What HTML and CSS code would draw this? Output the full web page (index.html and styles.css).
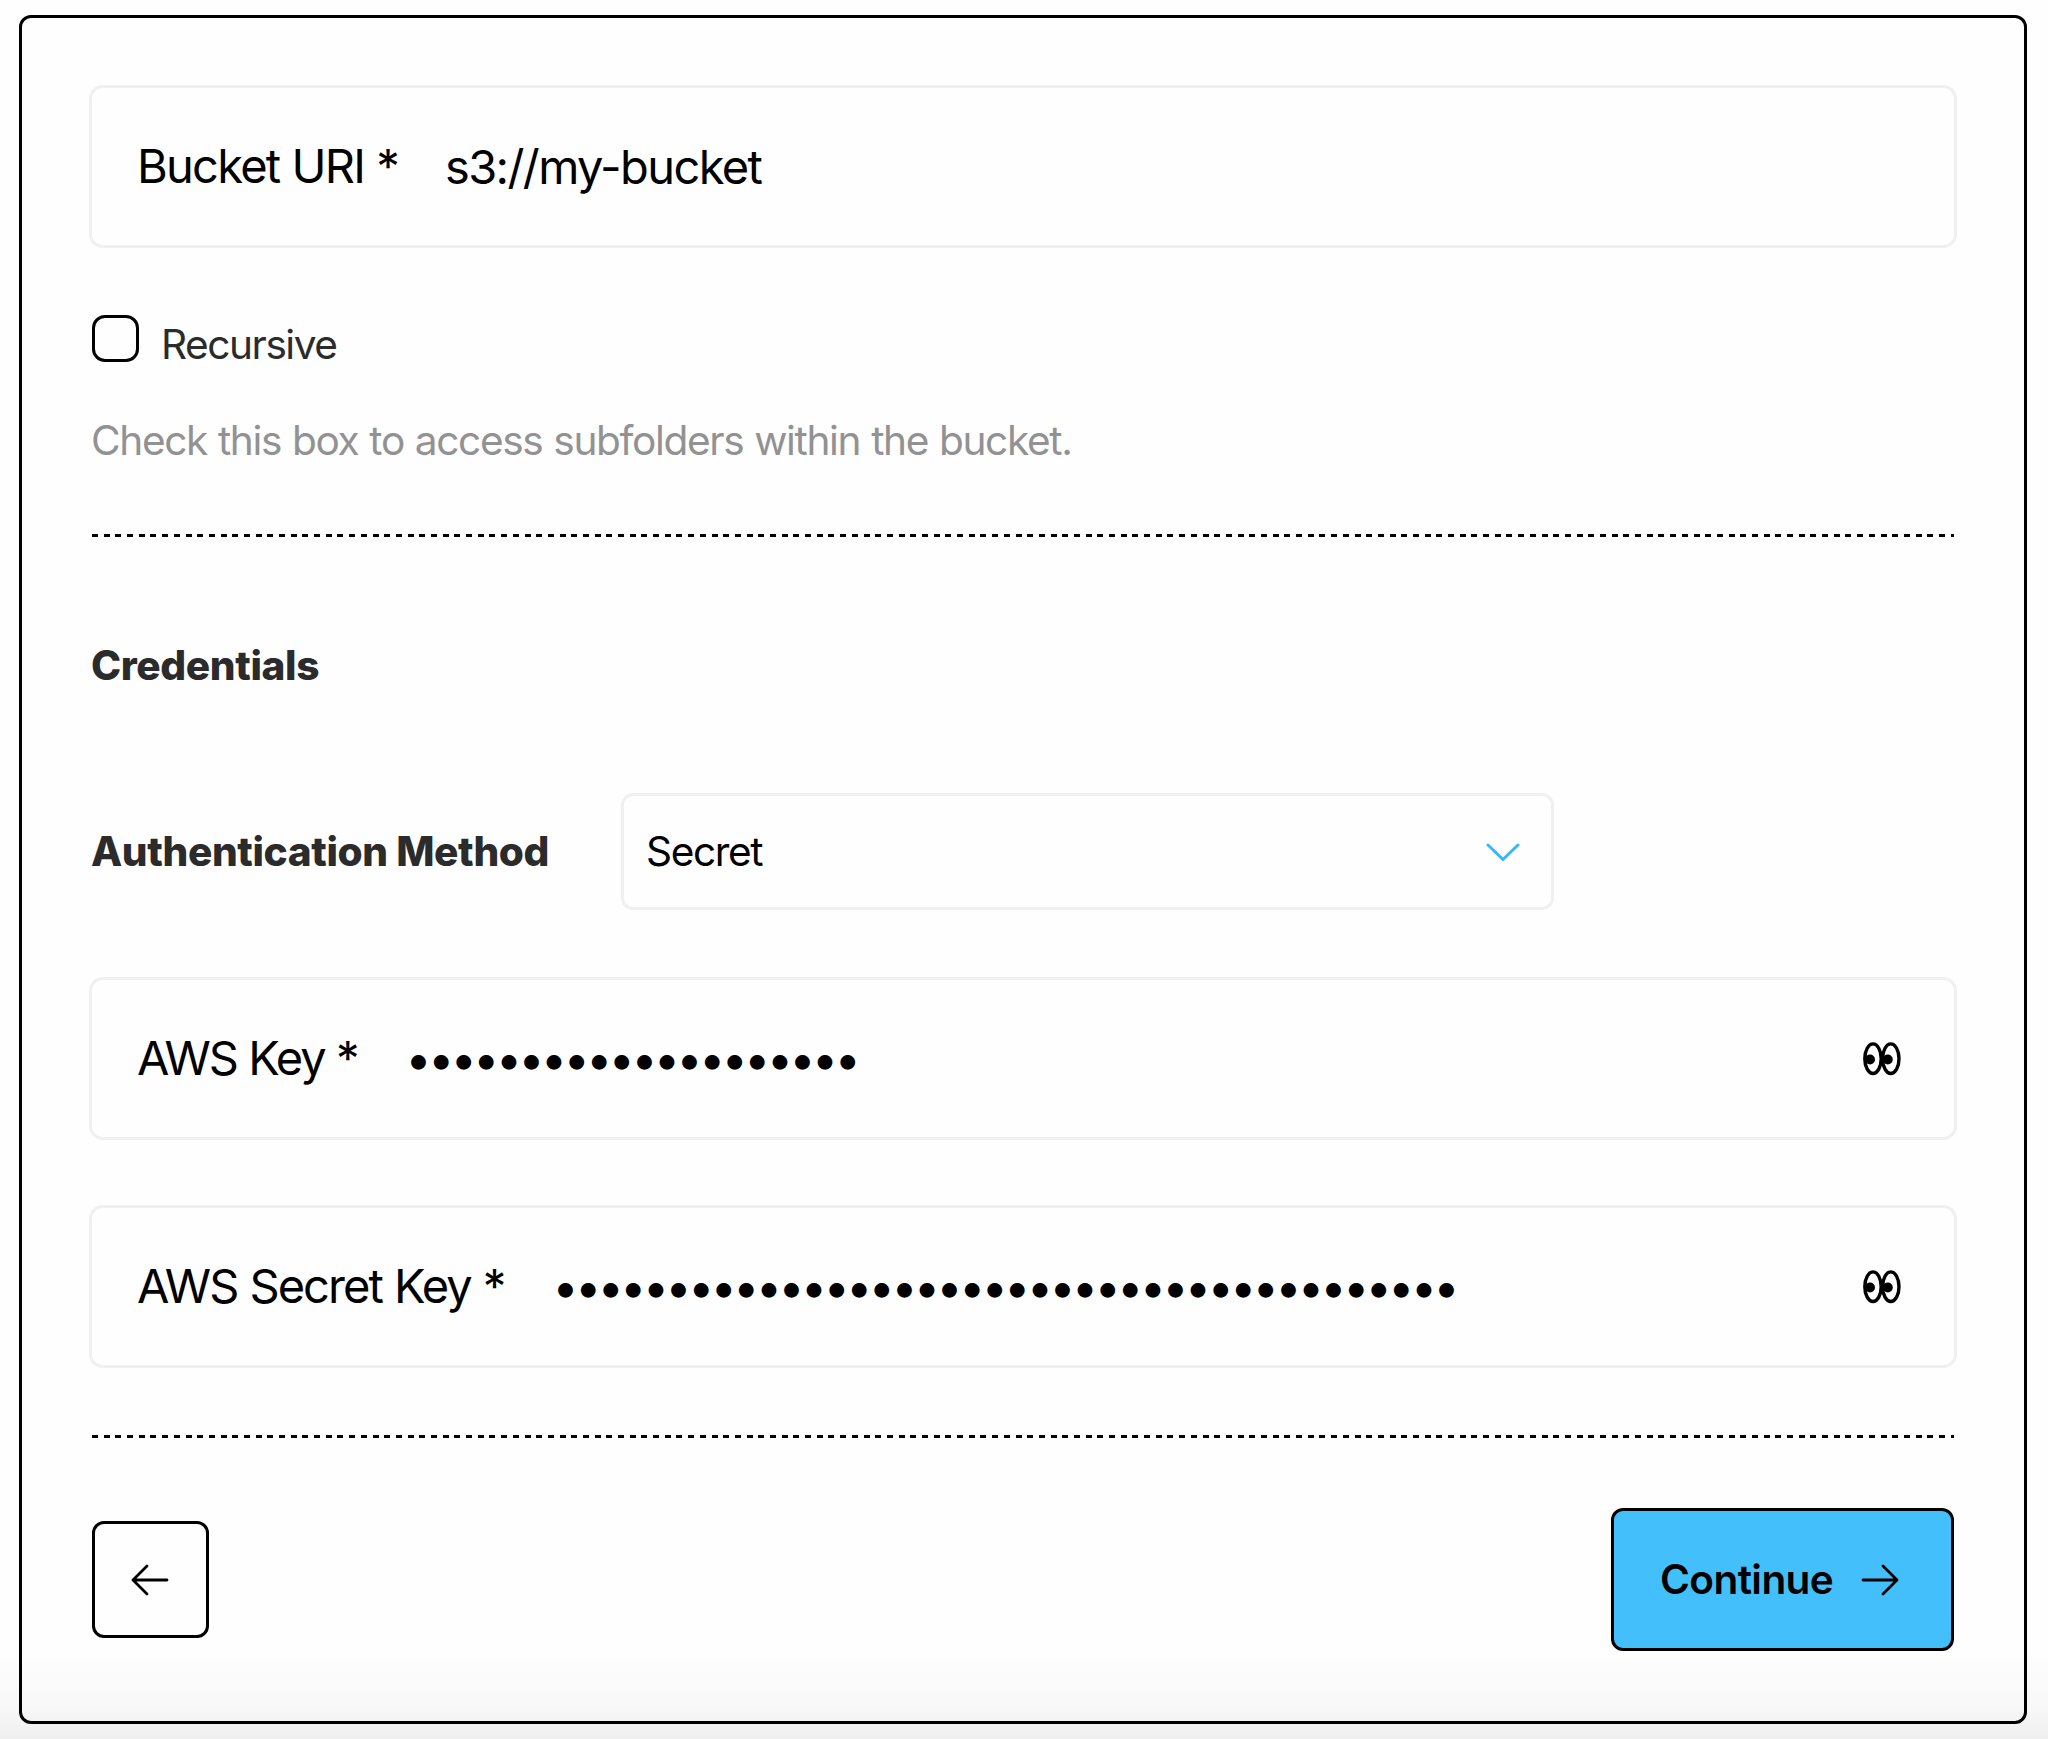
FILE: index.html
```html
<!DOCTYPE html>
<html lang="en">
<head>
<meta charset="utf-8">
<title>Bucket credentials</title>
<link rel="stylesheet" href="styles.css">
</head>
<body>
<form class="card">
  <label class="field">
    <span class="field-label label-uri">Bucket URI *</span>
    <span class="field-value">s3://my-bucket</span>
  </label>

  <label class="check-row">
    <span class="checkbox"></span>
    <span class="check-text">Recursive</span>
  </label>
  <p class="help">Check this box to access subfolders within the bucket.</p>
  <div class="divider"></div>

  <h2 class="heading">Credentials</h2>
  <div class="method">
    <span class="method-label">Authentication Method</span>
    <div class="select">
      <span class="select-value">Secret</span>
      <svg class="chevron" width="34" height="20" viewBox="0 0 34 20"><path d="M2 2 17 16.5 32 2"/></svg>
    </div>
  </div>

  <label class="field key-field">
    <span class="field-label label-key">AWS Key *</span>
    <span class="dots">••••••••••••••••••••</span>
    <svg class="eyes" width="38" height="34" viewBox="0 0 38 34"><ellipse cx="10" cy="16.7" rx="8.2" ry="14.8"/><ellipse cx="27.8" cy="16.7" rx="8.2" ry="14.8"/><circle cx="7" cy="17.5" r="5"/><circle cx="24.8" cy="17.5" r="5"/></svg>
  </label>
  <label class="field secret-field">
    <span class="field-label label-secret">AWS Secret Key *</span>
    <span class="dots">••••••••••••••••••••••••••••••••••••••••</span>
    <svg class="eyes" width="38" height="34" viewBox="0 0 38 34"><ellipse cx="10" cy="16.7" rx="8.2" ry="14.8"/><ellipse cx="27.8" cy="16.7" rx="8.2" ry="14.8"/><circle cx="7" cy="17.5" r="5"/><circle cx="24.8" cy="17.5" r="5"/></svg>
  </label>
  <div class="divider divider-end"></div>

  <div class="actions">
    <button class="back" type="button" aria-label="Back">
      <svg class="arrow" width="38" height="32" viewBox="0 0 38 32"><path d="M36 16H2M16 2 2 16 16 30"/></svg>
    </button>
    <button class="continue" type="button">
      <span>Continue</span>
      <svg class="arrow" width="38" height="32" viewBox="0 0 38 32"><path d="M2 16H36M22 2 36 16 22 30"/></svg>
    </button>
  </div>
</form>
</body>
</html>
```
FILE: styles.css
```css
* { box-sizing: border-box; }

body {
  margin: 0;
  height: 1739px;
  padding: 15px 21px 14px 19px;
  overflow: hidden;
  font-family: Inter, "Liberation Sans", sans-serif;
  color: #000;
  background: linear-gradient(#fefefe 0, #fefefe 1650px, #f8f8f8 1708px, #efefef 1739px);
}

.card {
  height: 1709px;
  border: 3px solid #000;
  border-radius: 12px;
  padding: 67px 67px 0 67px;
}

.field {
  display: flex;
  align-items: center;
  height: 163px;
  border: 3px solid #f0f0f0;
  border-radius: 14px;
  padding: 0 53px 2px 45px;
  font-size: 47px;
  line-height: 56px;
  white-space: nowrap;
}

.label-uri { letter-spacing: -1.75px; word-spacing: 0.6px; }
.label-key { letter-spacing: -2.15px; word-spacing: 0.4px; }
.label-secret { letter-spacing: -1.95px; word-spacing: 0.8px; }

.field-value { margin: 2px 0 0 47px; letter-spacing: -1.6px; }

.check-row {
  display: flex;
  align-items: flex-start;
  height: 60px;
  margin: 67px 0 0 3px;
}

.checkbox {
  width: 47px;
  height: 47px;
  border: 3px solid #000;
  border-radius: 13px;
}

.check-text {
  margin: 5px 0 0 22px;
  font-size: 40.6px;
  line-height: 50px;
  letter-spacing: -1.45px;
  color: #2b2b2b;
}

.help {
  margin: 41px 0 0 2px;
  font-size: 40.6px;
  line-height: 50px;
  letter-spacing: -1.36px;
  word-spacing: 0.95px;
  color: #929292;
  white-space: nowrap;
}

.divider {
  height: 3px;
  margin: 68px 3px 0 3px;
  background: repeating-linear-gradient(90deg, #000 0 6px, transparent 6px 11.69px);
}

.heading {
  margin: 103.5px 0 0 2px;
  font-size: 40.6px;
  line-height: 50px;
  font-weight: 800;
  letter-spacing: -0.37px;
  color: #2b2b2b;
}

.method {
  display: flex;
  align-items: center;
  height: 117px;
  margin: 102.5px 0 0 2px;
}

.method-label {
  width: 530px;
  font-size: 40.6px;
  font-weight: 800;
  letter-spacing: -0.37px;
  color: #2b2b2b;
  white-space: nowrap;
}

.select {
  display: flex;
  align-items: center;
  justify-content: space-between;
  width: 933px;
  height: 117px;
  border: 3px solid #f0f0f0;
  border-radius: 12px;
  padding: 0 31px 0 22px;
  font-size: 40.6px;
}

.select-value { letter-spacing: -1.4px; }

.chevron {
  margin-top: 2px;
  fill: none;
  stroke: #35b8fb;
  stroke-width: 3;
  stroke-linecap: round;
  stroke-linejoin: round;
}

.key-field { margin-top: 67px; }
.secret-field { margin-top: 65px; }

.dots { margin: 2px 0 0 48px; letter-spacing: -3.85px; }
.secret-field .dots { margin-left: 48px; }

.eyes { margin: 2px 0 0 auto; }
.eyes ellipse { fill: none; stroke: #000; stroke-width: 3.4; }

.divider-end { margin-top: 67px; }

.actions {
  display: flex;
  align-items: center;
  justify-content: space-between;
  margin: 70px 3px 0 3px;
}

button { font-family: inherit; padding: 0; color: #000; }

.back {
  display: flex;
  align-items: center;
  justify-content: center;
  width: 117px;
  height: 117px;
  border: 3px solid #000;
  border-radius: 12px;
  padding-right: 2px;
  background: #fefefe;
}

.continue {
  display: flex;
  align-items: center;
  width: 343px;
  height: 143px;
  border: 3px solid #000;
  border-radius: 12px;
  padding-left: 46px;
  background: #43bffb;
  font-size: 40.6px;
  font-weight: 600;
  letter-spacing: -0.6px;
}

.continue .arrow { margin-left: 28px; }

.arrow { fill: none; stroke: #000; stroke-width: 2.8; stroke-linecap: round; stroke-linejoin: round; }
```
